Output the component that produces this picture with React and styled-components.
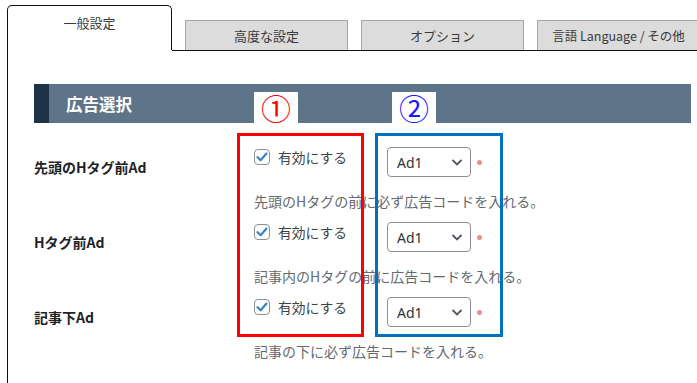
import React from "react";
import styled, { createGlobalStyle } from "styled-components";

const GlobalStyle = createGlobalStyle`
  body {
    margin: 0;
    background: #fff;
    font-family: "Noto Sans CJK JP", "Noto Sans", sans-serif;
    overflow: hidden;
  }
`;

const Page = styled.div`
  padding: 6px 0 0 7px;
  height: 377px;
  display: flex;
  flex-direction: column;
`;

const TabBar = styled.div`
  display: flex;
  align-items: flex-end;
  gap: 13px;
  height: 44px;
`;

const Tab = styled.div`
  box-sizing: border-box;
  flex: 0 0 ${(p) => (p.$active ? "165px" : "163px")};
  height: ${(p) => (p.$active ? "45px" : "30px")};
  background: ${(p) => (p.$active ? "#fff" : "#dcdcdc")};
  border: 1px solid ${(p) => (p.$active ? "#111" : "#a8a8a8")};
  border-bottom: none;
  border-radius: ${(p) => (p.$active ? "5px 5px 0 0" : "0")};
  color: #3a3a3a;
  font-size: ${(p) => (p.$small ? "12.5px" : "13px")};
  text-align: center;
  line-height: ${(p) => (p.$active ? "34px" : "30px")};
  white-space: nowrap;
  position: relative;
  z-index: 1;
  box-shadow: ${(p) => (p.$active ? "none" : "0 1px 0 #111")};
`;

const Panel = styled.div`
  flex: 1;
  border-left: 1px solid #111;
  padding: 34px 6px 0 26px;
  position: relative;
`;

const TabLine = styled.div`
  position: absolute;
  top: 0;
  left: 164px;
  right: 0;
  border-top: 1px solid #111;
`;

const Form = styled.div`
  position: relative;
`;

const SectionHeader = styled.h2`
  margin: 0;
  height: 39px;
  display: flex;
  align-items: center;
  background: #5e7488;
  border-left: 15px solid #1f3347;
  padding-left: 17px;
  color: #fff;
  font-size: 16.5px;
  font-weight: 700;
`;

const Rows = styled.div`
  padding-top: 13px;
`;

const Row = styled.div`
  display: grid;
  grid-template-columns: 220px 1fr;
  padding-top: 11px;
`;

const Label = styled.div`
  font-size: 14px;
  font-weight: 700;
  color: #1d2327;
  line-height: 20px;
  padding-top: 10px;
`;

const Field = styled.div`
  display: flex;
  flex-direction: column;
`;

const Line = styled.div`
  display: flex;
  align-items: flex-start;
  height: 30px;
`;

const CheckLabel = styled.label`
  width: 133px;
  display: flex;
  align-items: center;
  gap: 8px;
  margin-top: 1px;
  font-size: 13.8px;
  color: #3c434a;
  line-height: 18px;
`;

const Box = styled.span`
  box-sizing: border-box;
  width: 16px;
  height: 16px;
  border: 1px solid #8c8f94;
  border-radius: 4px;
  display: flex;
  align-items: center;
  justify-content: center;
  background: #fff;
`;

const Select = styled.div`
  box-sizing: border-box;
  width: 84px;
  height: 30px;
  border: 1px solid #8c8f94;
  border-radius: 4px;
  display: flex;
  align-items: center;
  justify-content: space-between;
  padding: 0 6px 0 9px;
  font-size: 14px;
  color: #2c3338;
  font-family: "Noto Sans", sans-serif;
`;

const Dot = styled.span`
  width: 5px;
  height: 5px;
  border-radius: 50%;
  background: #f28b8b;
  margin: 13px 0 0 6px;
`;

const Desc = styled.div`
  margin-top: 14px;
  font-size: 14px;
  line-height: 20px;
  color: #646970;
  white-space: nowrap;
`;

const Frame = styled.div`
  position: absolute;
  top: 49px;
  left: ${(p) => p.$left}px;
  width: ${(p) => p.$width}px;
  height: 204px;
  box-sizing: border-box;
  border: 3px solid ${(p) => p.$color};
  pointer-events: none;
`;

const Marker = styled.div`
  position: absolute;
  top: 8px;
  left: ${(p) => p.$left}px;
  width: 44px;
  height: 31px;
  background: #fff;
  color: ${(p) => p.$color};
  font-size: 30px;
  line-height: 31px;
  text-align: center;
`;

const Check = () => (
  <Box>
    <svg width="14" height="14" viewBox="0 0 14 14">
      <path d="M2.5 7.2 L5.6 10.2 L11.5 3.6" fill="none" stroke="#3582c4" strokeWidth="2.2" strokeLinecap="round" strokeLinejoin="round" />
    </svg>
  </Box>
);

const Chevron = () => (
  <svg width="14" height="14" viewBox="0 0 14 14">
    <path d="M2.5 5 L7 9.5 L11.5 5" fill="none" stroke="#50575e" strokeWidth="1.8" />
  </svg>
);

const rows = [
  { label: "先頭のHタグ前Ad", desc: "先頭のHタグの前に必ず広告コードを入れる。" },
  { label: "Hタグ前Ad", desc: "記事内のHタグの前に広告コードを入れる。" },
  { label: "記事下Ad", desc: "記事の下に必ず広告コードを入れる。" },
];

export default function App() {
  return (
    <>
      <GlobalStyle />
      <Page>
        <TabBar>
          <Tab $active>一般設定</Tab>
          <Tab>高度な設定</Tab>
          <Tab>オプション</Tab>
          <Tab $small>言語 Language / その他</Tab>
        </TabBar>
        <Panel>
          <TabLine />
          <Form>
            <SectionHeader>広告選択</SectionHeader>
            <Rows>
              {rows.map((r) => (
                <Row key={r.label}>
                  <Label>{r.label}</Label>
                  <Field>
                    <Line>
                      <CheckLabel>
                        <Check />
                        有効にする
                      </CheckLabel>
                      <Select>
                        Ad1
                        <Chevron />
                      </Select>
                      <Dot />
                    </Line>
                    <Desc>{r.desc}</Desc>
                  </Field>
                </Row>
              ))}
            </Rows>
            <Marker $left={220} $color="#ff0000">①</Marker>
            <Marker $left={358} $color="#1a1aff">②</Marker>
            <Frame $left={203} $width={127} $color="#ff0000" />
            <Frame $left={341} $width={128} $color="#0070c0" />
          </Form>
        </Panel>
      </Page>
    </>
  );
}
